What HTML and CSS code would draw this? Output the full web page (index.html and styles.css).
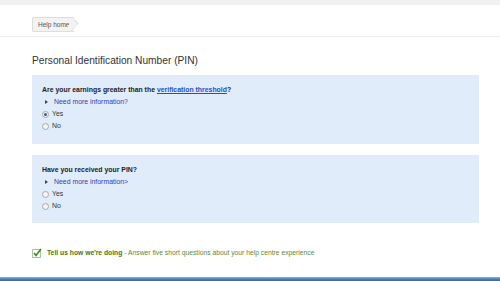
FILE: index.html
```html
<!DOCTYPE html>
<html>
<head>
<meta charset="utf-8">
<link rel="stylesheet" href="styles.css">
</head>
<body>
<div class="topbar"></div>
<header class="header">
  <span class="crumb">Help home</span>
</header>
<main class="main">
  <h1 class="title">Personal Identification Number (PIN)</h1>
  <section class="qbox">
    <p class="question">Are your earnings greater than the <a class="link" href="#">verification threshold</a>?</p>
    <div class="more"><span class="tri"></span>Need more information?</div>
    <label class="opt"><span class="radio checked"></span>Yes</label>
    <label class="opt"><span class="radio"></span>No</label>
  </section>
  <section class="qbox second">
    <p class="question">Have you received your PIN?</p>
    <div class="more"><span class="tri"></span>Need more information&gt;</div>
    <label class="opt"><span class="radio"></span>Yes</label>
    <label class="opt"><span class="radio"></span>No</label>
  </section>
  <div class="feedback">
    <svg class="check" width="10" height="10" viewBox="0 0 10 10">
      <rect x="0.5" y="1.5" width="8" height="8" fill="#fff" stroke="#a9c79a"/>
      <path d="M2 5 L4 7.5 L9 1" fill="none" stroke="#3d8a1e" stroke-width="1.6"/>
    </svg>
    <b>Tell us how we're doing</b>&nbsp;- Answer five short questions about your help centre experience
  </div>
</main>
<div class="taskbar"></div>
</body>
</html>
```

FILE: styles.css
```css
* { box-sizing: border-box; }
html, body { margin: 0; padding: 0; }
body {
  width: 500px;
  height: 281px;
  overflow: hidden;
  background: #fff;
  font-family: "Liberation Sans", Arial, sans-serif;
  color: #222;
  position: relative;
}
.topbar {
  height: 5px;
  background: #f1f1f1;
}
.header {
  height: 32px;
  border-bottom: 1px solid #ececec;
  padding: 8px 0 0 32px;
}
.crumb {
  display: inline-block;
  position: relative;
  height: 15px;
  line-height: 14px;
  padding: 0 5px 0 5px;
  font-size: 6.5px;
  color: #555;
  background: #f3f3f3;
  border: 1px solid #ddd;
  border-right: none;
  border-radius: 2px 0 0 2px;
}
.crumb::after {
  content: "";
  position: absolute;
  right: -4px;
  top: 2px;
  width: 9px;
  height: 9px;
  background: #f3f3f3;
  border-top: 1px solid #ddd;
  border-right: 1px solid #ddd;
  transform: rotate(45deg) scaleX(0.6);
  transform-origin: center;
  z-index: -0;
}
.main {
  padding: 0 21px 0 32px;
}
.title {
  margin: 16px 0 0 0;
  font-size: 10.2px;
  font-weight: normal;
  color: #333;
  line-height: 15px;
  height: 22px;
}
.qbox {
  background: #e1ecfb;
  height: 69px;
  padding: 9px 10px 0 10px;
}
.qbox.second {
  margin-top: 11px;
  height: 68px;
}
.question {
  margin: 0;
  font-size: 6.9px;
  font-weight: bold;
  color: #222;
  line-height: 12px;
}
.link {
  color: #2251c4;
  text-decoration: underline;
}
.more {
  font-size: 6.9px;
  color: #3a3aa8;
  line-height: 12px;
  display: flex;
  align-items: center;
}
.tri {
  width: 0;
  height: 0;
  border-left: 3px solid #444;
  border-top: 2.5px solid transparent;
  border-bottom: 2.5px solid transparent;
  margin: 0 6px 0 3px;
}
.opt {
  display: flex;
  align-items: center;
  font-size: 6.9px;
  color: #333;
  line-height: 12px;
}
.radio {
  width: 7px;
  height: 7px;
  border-radius: 50%;
  border: 1px solid #a8a8a8;
  background: #f4f4f4;
  margin-right: 3px;
  position: relative;
}
.radio.checked::after {
  content: "";
  position: absolute;
  left: 1px;
  top: 1px;
  width: 3px;
  height: 3px;
  border-radius: 50%;
  background: #3a5b8a;
}
.feedback {
  margin-top: 25px;
  font-size: 6.75px;
  color: #5b8a3c;
  display: flex;
  align-items: center;
  line-height: 10px;
}
.feedback b {
  color: #3e7a22;
}
.check {
  margin-right: 5px;
}
.taskbar {
  position: absolute;
  left: 0;
  right: 0;
  bottom: 0;
  height: 4px;
  background: linear-gradient(to bottom, #8fb7d6 0%, #3d86c2 50%, #2a6aa8 100%);
}
```
